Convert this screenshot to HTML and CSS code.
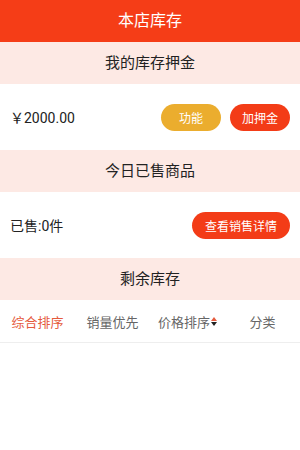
FILE: index.html
```html
<!DOCTYPE html>
<html lang="zh">
<head>
    <meta charset="UTF-8">
    <meta name="viewport" content="width=device-width, initial-scale=1.0">
    <title>本店库存</title>
    <link rel="stylesheet" href="styles.css">
</head>
<body>
    <header class="topbar">本店库存</header>

    <div class="band">我的库存押金</div>
    <div class="row">
        <span class="row-text">￥2000.00</span>
        <div class="actions">
            <button class="pill pill-yellow">功能</button>
            <button class="pill pill-red">加押金</button>
        </div>
    </div>

    <div class="band">今日已售商品</div>
    <div class="row">
        <span class="row-text">已售:0件</span>
        <button class="pill pill-red pill-wide">查看销售详情</button>
    </div>

    <div class="band">剩余库存</div>
    <nav class="tabs">
        <div class="tab active">综合排序</div>
        <div class="tab">销量优先</div>
        <div class="tab">价格排序<span class="sort"><i class="up"></i><i class="down"></i></span></div>
        <div class="tab">分类</div>
    </nav>
</body>
</html>
```

FILE: styles.css
```css
body {
    margin: 0;
    background-color: #fff;
    font-family: Roboto, "Noto Sans CJK SC", sans-serif;
    color: #222;
}
.topbar {
    height: 42px;
    line-height: 42px;
    background-color: #f53d17;
    color: #fff;
    text-align: center;
    font-size: 16px;
}
.band {
    height: 42px;
    line-height: 42px;
    background-color: #fde9e4;
    text-align: center;
    font-size: 15px;
    color: #222;
}
.row {
    height: 66px;
    display: flex;
    align-items: center;
    justify-content: space-between;
    padding: 0 10px;
}
.row-text {
    font-size: 14px;
    color: #222;
}
.actions {
    display: flex;
    gap: 9px;
}
.pill {
    width: 60px;
    height: 27px;
    border: none;
    border-radius: 14px;
    color: #fff;
    font-size: 12px;
    font-family: inherit;
    padding: 0;
}
.pill-yellow {
    background-color: #ebad2e;
}
.pill-red {
    background-color: #f33c17;
}
.pill-wide {
    width: 98px;
}
.tabs {
    display: grid;
    grid-template-columns: repeat(4, 1fr);
    height: 42px;
    border-bottom: 1px solid #eee;
}
.tab {
    display: flex;
    align-items: center;
    justify-content: center;
    font-size: 13px;
    color: #666;
}
.tab.active {
    color: #e55a3c;
}
.sort {
    display: flex;
    flex-direction: column;
    gap: 1px;
    margin-left: 1px;
}
.sort i {
    width: 0;
    height: 0;
    border-left: 3px solid transparent;
    border-right: 3px solid transparent;
}
.sort .up {
    border-bottom: 4px solid #e55a3c;
}
.sort .down {
    border-top: 4px solid #222;
}
```
